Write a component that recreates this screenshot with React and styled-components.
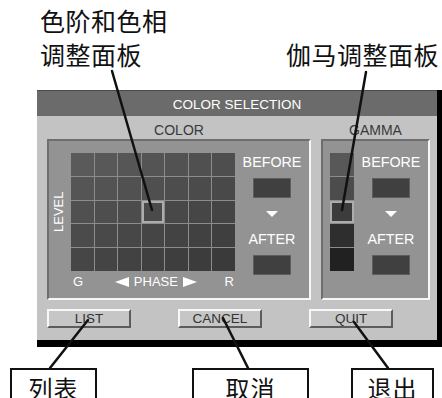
import React from "react";
import styled, { createGlobalStyle } from "styled-components";

const Global = createGlobalStyle`
  html, body { margin: 0; padding: 0; background: #fff; }
  body { font-family: "Liberation Sans", Arial, sans-serif; }
`;

const Page = styled.div`
  position: relative;
  width: 442px;
  height: 398px;
  overflow: hidden;
  background: #fff;
`;

const Header = styled.div`
  height: 90px;
  box-sizing: border-box;
  display: flex;
  justify-content: space-between;
  align-items: flex-end;
  padding: 0 3px 19px 40px;
`;

const Callout = styled.div`
  font-family: "Noto Sans CJK SC", "Noto Sans", sans-serif;
  font-size: 25px;
  line-height: 34px;
  color: #111;
  letter-spacing: 0.5px;
`;

const Dialog = styled.div`
  margin-left: 37px;
  width: 400px;
  border-right: 5px solid #000;
  border-bottom: 7px solid #000;
`;

const TitleBar = styled.div`
  height: 26px;
  background: #6b6b6b;
  border-top: 1px solid #4a4a4a;
  box-sizing: border-box;
  color: #fff;
  font-size: 13.5px;
  display: flex;
  align-items: center;
  justify-content: center;
  padding-top: 1px;
`;

const Body = styled.div`
  background: #c3c3c3;
  height: 224px;
  box-sizing: border-box;
  padding: 0 7px 0 10px;
`;

const Sections = styled.div`
  display: flex;
  gap: 10px;
`;

const Section = styled.div`
  width: ${p => p.$w}px;
  display: flex;
  flex-direction: column;
`;

const SectionTitle = styled.div`
  height: 23px;
  display: flex;
  align-items: center;
  justify-content: center;
  padding-top: 5px;
  box-sizing: border-box;
  color: #3a3a3a;
  font-size: 14px;
`;

const Panel = styled.div`
  height: 161px;
  box-sizing: border-box;
  background: #939393;
  border-top: 2px solid #6e6e6e;
  border-left: 2px solid #6e6e6e;
  border-bottom: 2px solid #f6f6f6;
  border-right: 2px solid #f6f6f6;
  display: flex;
`;

const MapArea = styled.div`
  display: grid;
  grid-template-columns: 22px 164px;
  grid-template-rows: 118px 20px;
  padding-top: 12px;
`;

const LevelLabel = styled.div`
  color: #fff;
  font-size: 13px;
  writing-mode: vertical-rl;
  transform: rotate(180deg);
  display: flex;
  align-items: center;
  justify-content: center;
  padding-left: 3px;
`;

const Grid = styled.div`
  display: grid;
  grid-template-columns: repeat(${p => p.$cols}, 1fr);
  grid-template-rows: repeat(5, 1fr);
  gap: 1px;
  background: #8c8c8c;
  width: ${p => p.$w}px;
  height: 118px;
`;

const Cell = styled.div`
  box-sizing: border-box;
  border: ${p => (p.$sel ? "2px solid #acacac" : "none")};
`;

const PhaseRow = styled.div`
  grid-column: 2;
  display: flex;
  justify-content: space-between;
  align-items: center;
  color: #fff;
  font-size: 13px;
  padding: 1px 1px 0 2px;
`;

const PhaseMid = styled.div`
  display: flex;
  align-items: center;
  gap: 5px;
  margin-left: 4px;
`;

const CompareCol = styled.div`
  flex: 1;
  display: flex;
  flex-direction: column;
  align-items: center;
  padding-top: 13px;
  color: #fff;
  font-size: 14.3px;
  line-height: 16px;
`;

const Swatch = styled.div`
  width: 38px;
  height: 20px;
  box-sizing: border-box;
  background: #404040;
  border: 1px solid #5e5e5e;
  margin-top: 8px;
`;

const DownArrow = styled.div`
  width: 0;
  height: 0;
  border-left: 6.5px solid transparent;
  border-right: 6.5px solid transparent;
  border-top: 6px solid #fff;
  margin: 13px 0 14px;
`;

const GammaWrap = styled.div`
  padding: 12px 0 0 7px;
`;

const Buttons = styled.div`
  display: flex;
  gap: 47px;
  margin-top: 9px;
`;

const Button = styled.div`
  width: 84px;
  height: 19px;
  box-sizing: border-box;
  background: #c6c6c6;
  border-top: 2px solid #f8f8f8;
  border-left: 2px solid #f8f8f8;
  border-bottom: 2px solid #5c5c5c;
  border-right: 2px solid #5c5c5c;
  color: #333;
  font-size: 13.5px;
  display: flex;
  align-items: center;
  justify-content: center;
`;

const Labels = styled.div`
  display: flex;
  margin-top: 21px;
`;

const LabelBox = styled.div`
  margin-left: ${p => p.$ml}px;
  width: ${p => p.$w}px;
  height: 44px;
  box-sizing: border-box;
  border: 2px solid #111;
  font-family: "Noto Sans CJK SC", "Noto Sans", sans-serif;
  font-size: 24px;
  line-height: 30px;
  padding-top: 3px;
  text-align: center;
  letter-spacing: 1px;
  color: #111;
`;

const Leaders = styled.svg`
  position: absolute;
  left: 0;
  top: 0;
  pointer-events: none;
`;

const Tri = ({ dir }) => (
  <svg width="14" height="10" viewBox="0 0 14 10">
    {dir === "left" ? (
      <polygon points="0,5 14,0 14,10" fill="#fff" />
    ) : (
      <polygon points="14,5 0,0 0,10" fill="#fff" />
    )}
  </svg>
);

const shade = v => {
  const h = Math.max(0, Math.min(255, Math.round(v))).toString(16).padStart(2, "0");
  return `#${h}${h}${h}`;
};

const gridCells = [];
for (let r = 0; r < 5; r++) {
  for (let c = 0; c < 7; c++) {
    gridCells.push({ key: `${r}-${c}`, color: shade(90 - r * 5 - c * 2), sel: r === 2 && c === 3 });
  }
}

const gammaCells = [0x58, 0x4c, 0x3c, 0x2e, 0x21];

const Compare = () => (
  <CompareCol>
    <span>BEFORE</span>
    <Swatch />
    <DownArrow />
    <span>AFTER</span>
    <Swatch />
  </CompareCol>
);

export default function App() {
  return (
    <Page>
      <Global />
      <Header>
        <Callout>
          色阶和色相
          <br />
          调整面板
        </Callout>
        <Callout>伽马调整面板</Callout>
      </Header>
      <Dialog>
        <TitleBar>COLOR SELECTION</TitleBar>
        <Body>
          <Sections>
            <Section $w={264}>
              <SectionTitle>COLOR</SectionTitle>
              <Panel>
                <MapArea>
                  <LevelLabel>LEVEL</LevelLabel>
                  <Grid $cols={7} $w={164}>
                    {gridCells.map(c => (
                      <Cell key={c.key} $sel={c.sel} style={{ background: c.color }} />
                    ))}
                  </Grid>
                  <PhaseRow>
                    <span>G</span>
                    <PhaseMid>
                      <Tri dir="left" />
                      <span>PHASE</span>
                      <Tri dir="right" />
                    </PhaseMid>
                    <span>R</span>
                  </PhaseRow>
                </MapArea>
                <Compare />
              </Panel>
            </Section>
            <Section $w={109}>
              <SectionTitle>GAMMA</SectionTitle>
              <Panel>
                <GammaWrap>
                  <Grid $cols={1} $w={24}>
                    {gammaCells.map((v, i) => (
                      <Cell key={i} $sel={i === 2} style={{ background: shade(v) }} />
                    ))}
                  </Grid>
                </GammaWrap>
                <Compare />
              </Panel>
            </Section>
          </Sections>
          <Buttons>
            <Button>LIST</Button>
            <Button>CANCEL</Button>
            <Button>QUIT</Button>
          </Buttons>
        </Body>
      </Dialog>
      <Labels>
        <LabelBox $ml={10} $w={87}>列表</LabelBox>
        <LabelBox $ml={95} $w={117}>取消</LabelBox>
        <LabelBox $ml={42} $w={83}>退出</LabelBox>
      </Labels>
      <Leaders width="442" height="398" viewBox="0 0 442 398">
        <g stroke="#111" strokeWidth="2.5" strokeLinecap="round">
          <line x1="112" y1="71" x2="152" y2="210" />
          <line x1="366" y1="72" x2="342" y2="210" />
          <line x1="88" y1="320" x2="50" y2="368" />
          <line x1="223" y1="318" x2="248" y2="368" />
          <line x1="354" y1="322" x2="388" y2="368" />
        </g>
      </Leaders>
    </Page>
  );
}
